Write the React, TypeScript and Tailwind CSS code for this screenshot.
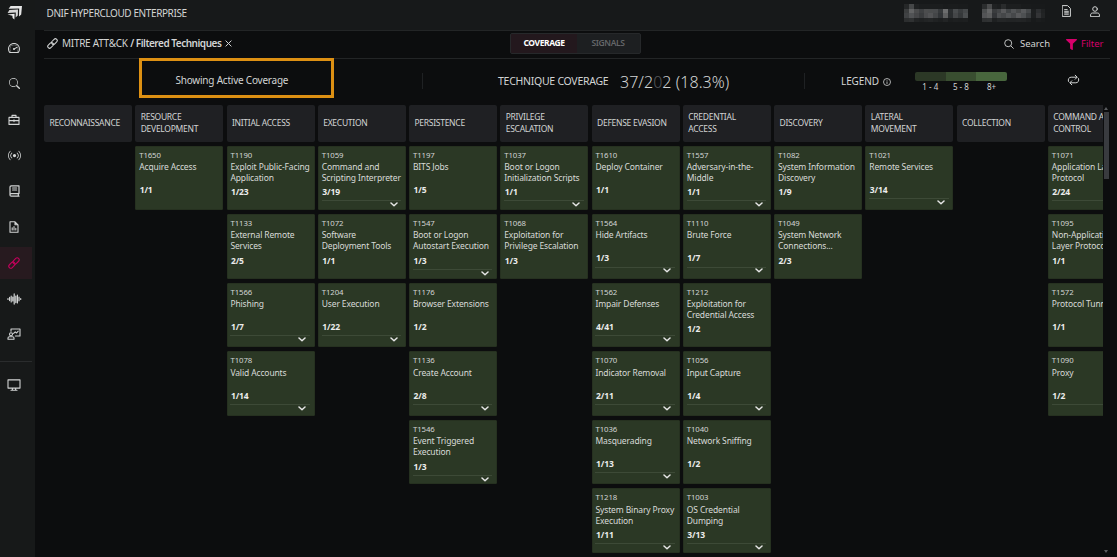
import type { ReactNode } from "react";
import { LiaTachometerAltSolid } from "react-icons/lia";
import { BsSearch, BsBroadcast } from "react-icons/bs";
import { FaFilter } from "react-icons/fa";

type Technique = { id: string; name: string; count: string; expandable?: boolean };
type Tactic = { title: string; items: Technique[] };

const t = (id: string, name: string, count: string, expandable = false): Technique => ({ id, name, count, expandable });

const tactics: Tactic[] = [
  { title: "RECONNAISSANCE", items: [] },
  { title: "RESOURCE\nDEVELOPMENT", items: [t("T1650", "Acquire Access", "1/1")] },
  {
    title: "INITIAL ACCESS",
    items: [
      t("T1190", "Exploit Public-Facing\nApplication", "1/23"),
      t("T1133", "External Remote\nServices", "2/5"),
      t("T1566", "Phishing", "1/7", true),
      t("T1078", "Valid Accounts", "1/14", true),
    ],
  },
  {
    title: "EXECUTION",
    items: [
      t("T1059", "Command and\nScripting Interpreter", "3/19", true),
      t("T1072", "Software\nDeployment Tools", "1/1"),
      t("T1204", "User Execution", "1/22", true),
    ],
  },
  {
    title: "PERSISTENCE",
    items: [
      t("T1197", "BITS Jobs", "1/5"),
      t("T1547", "Boot or Logon\nAutostart Execution", "1/3", true),
      t("T1176", "Browser Extensions", "1/2"),
      t("T1136", "Create Account", "2/8", true),
      t("T1546", "Event Triggered\nExecution", "1/3", true),
    ],
  },
  {
    title: "PRIVILEGE\nESCALATION",
    items: [
      t("T1037", "Boot or Logon\nInitialization Scripts", "1/1", true),
      t("T1068", "Exploitation for\nPrivilege Escalation", "1/3"),
    ],
  },
  {
    title: "DEFENSE EVASION",
    items: [
      t("T1610", "Deploy Container", "1/1"),
      t("T1564", "Hide Artifacts", "1/3", true),
      t("T1562", "Impair Defenses", "4/41", true),
      t("T1070", "Indicator Removal", "2/11", true),
      t("T1036", "Masquerading", "1/13", true),
      t("T1218", "System Binary Proxy\nExecution", "1/11", true),
    ],
  },
  {
    title: "CREDENTIAL\nACCESS",
    items: [
      t("T1557", "Adversary-in-the-\nMiddle", "1/1", true),
      t("T1110", "Brute Force", "1/7", true),
      t("T1212", "Exploitation for\nCredential Access", "1/2"),
      t("T1056", "Input Capture", "1/4", true),
      t("T1040", "Network Sniffing", "1/2"),
      t("T1003", "OS Credential\nDumping", "3/13", true),
    ],
  },
  {
    title: "DISCOVERY",
    items: [
      t("T1082", "System Information\nDiscovery", "1/9"),
      t("T1049", "System Network\nConnections...", "2/3"),
    ],
  },
  { title: "LATERAL\nMOVEMENT", items: [t("T1021", "Remote Services", "3/14", true)] },
  { title: "COLLECTION", items: [] },
  {
    title: "COMMAND AND\nCONTROL",
    items: [
      t("T1071", "Application Layer\nProtocol", "2/24", true),
      t("T1095", "Non-Application\nLayer Protocol", "1/1"),
      t("T1572", "Protocol Tunneling", "1/1"),
      t("T1090", "Proxy", "1/2", true),
    ],
  },
];

function Icon({ w, h, box, sw = 1, children }: { w: number; h: number; box: string; sw?: number; children: ReactNode }) {
  return (
    <svg width={w} height={h} viewBox={box} fill="none" stroke="currentColor" strokeWidth={sw} strokeLinecap="round" strokeLinejoin="round" className="shrink-0">
      {children}
    </svg>
  );
}

const Logo = () => (
  <svg width="16" height="16" viewBox="0 0 16 16" className="shrink-0">
    <path d="M3.6 1 H15 L14.2 9.6 L12 11.6 L12.2 3.6 L1.6 3.8 Z" fill="#e6e6e6" />
    <path d="M2.4 5 L11 4.6 L10.8 10.6 L8.6 12.4 L8.8 7.6 L0.6 8 Z" fill="#d6d6d6" />
    <path d="M0.4 9.4 L7.6 8.8 L7.4 14.4 L5.6 13 L5.4 10.8 Z" fill="#ececec" />
  </svg>
);

const Briefcase = () => (
  <Icon w={12} h={12} box="0 0 12 12" sw={1.1}>
    <path d="M1 3.4h10v7H1zM4 3.2V1.4h4v1.8M1 6.6h10M6 5.8v1.8" />
  </Icon>
);

const Book = () => (
  <Icon w={11} h={12} box="0 0 11 12" sw={1.2}>
    <path d="M10 8.6V.8H2.2C1.4.8 1 1.2 1 2v8c0 .8.4 1.2 1.2 1.2H10M10 8.6H2.2C1.4 8.6 1 9.2 1 9.9M9.3 8.7v2.4M3.6 3h4M3.6 5h4" />
  </Icon>
);

const FileChart = () => (
  <Icon w={10} h={12} box="0 0 10 12" sw={1.1}>
    <path d="M1 .8h5l3 3v7.4H1zM6 .8v3h3M3.2 9V6.8M5 9V5.6M6.8 9V7.4" />
  </Icon>
);

const LinkIcon = ({ size = 12, sw = 1.1 }: { size?: number; sw?: number }) => (
  <Icon w={size} h={size} box="0 0 12 12" sw={sw}>
    <rect x="-3.5" y="-2" width="7" height="4" rx="2" transform="translate(3.9 8.1) rotate(-45)" />
    <rect x="-3.5" y="-2" width="7" height="4" rx="2" transform="translate(8.1 3.9) rotate(-45)" />
  </Icon>
);

const Wave = () => (
  <Icon w={15} h={12} box="0 0 15 12" sw={1.2}>
    <path d="M1 5.5v1M2.6 4.4v3.2M4.2 3v6M5.8 4v4M7.2 .9v10.2M8.8 3v6.6M10.4 2v8M12 4.2v3.6M13.7 5.5v1" />
  </Icon>
);

const Presenter = () => (
  <Icon w={14} h={12} box="0 0 14 12" sw={1.1}>
    <path d="M4 3.2V1h9v7H8.4M6.6 5.4l1.6-1.6 1.4 1.2 1.6-1.8" />
    <circle cx="4" cy="6.2" r="1.5" />
    <path d="M1 11.2V10c0-.8.6-1.2 1.4-1.2h3.2c.8 0 1.4.4 1.4 1.2v1.2z" />
  </Icon>
);

const Desktop = () => (
  <Icon w={14} h={12} box="0 0 14 12" sw={1.1}>
    <path d="M1 .9h12v8.2H1zM5.4 9.2v2M8.6 9.2v2M4 11.3h6" />
  </Icon>
);

const Chevron = () => (
  <Icon w={8} h={5} box="0 0 8 5" sw={1.5}>
    <path d="M1 1l3 2.7L7 1" />
  </Icon>
);

const navItems: { key: string; icon: ReactNode; active?: boolean }[] = [
  { key: "dashboard", icon: <LiaTachometerAltSolid size={16} /> },
  { key: "search", icon: <BsSearch size={11} className="mb-px" /> },
  { key: "cases", icon: <Briefcase /> },
  { key: "streams", icon: <BsBroadcast size={13} /> },
  { key: "library", icon: <Book /> },
  { key: "reports", icon: <FileChart /> },
  { key: "coverage", icon: <LinkIcon size={12} />, active: true },
  { key: "signals", icon: <Wave /> },
  { key: "training", icon: <Presenter /> },
];

function Sidebar() {
  return (
    <aside className="flex w-[35px] shrink-0 flex-col bg-[#171919] text-[#d2d4d4]">
      <div className="flex h-[30.2px] w-[29px] shrink-0 items-center justify-center pb-[5px]">
        <Logo />
      </div>
      {navItems.map((n) => (
        <div key={n.key} className="flex h-[35.8px] items-center">
          <div className={n.active ? "flex h-8 w-8 items-center bg-[#271a1f] text-[#c4005c]" : "flex h-8 w-8 items-center"}>
            <div className="flex w-[28px] justify-center">{n.icon}</div>
          </div>
        </div>
      ))}
      <div className="mt-[8.6px] h-px w-8 bg-[#2a2c2d]" />
      <div className="mt-[17px] flex w-[28px] justify-center">
        <Desktop />
      </div>
    </aside>
  );
}

const mosaicA = [
  ["#252728", "#454748", "#1f2122", "#1b1d1e", "#1b1d1e", "#1b1d1e", "#1b1d1e", "#1b1d1e", "#191b1c", "#1a1c1d", "#1a1c1d", "#191b1c", "#191b1c"],
  ["#3b3d3e", "#626364", "#4b4c4d", "#3e4042", "#4c4d4e", "#4a4c4d", "#494b4d", "#36393b", "#6c6d6e", "#2b2e30", "#484b4d", "#393c3e", "#45484a"],
  ["#404244", "#515355", "#454648", "#393b3d", "#4a4b4d", "#525355", "#444648", "#313437", "#5e5f60", "#2a2d2f", "#444648", "#35383a", "#4b4e50"],
  ["#2c2e2f", "#2f3132", "#222425", "#1f2122", "#222425", "#242627", "#202223", "#1d1f20", "#222425", "#1b1d1e", "#1d1f20", "#1c1e1f", "#1d1f20"],
];
const mosaicB = [
  ["#2b2d2e", "#4a4b4c", "#1f2122", "#1c1e1f", "#292b2c", "#1c1e1f", "#1c1e1f", "#1c1e1f", "#191b1c", "#191b1c", "#181a1b", "#181a1b", "#181a1b"],
  ["#4c4e4f", "#646566", "#3a3c3e", "#434547", "#58595b", "#414446", "#525456", "#464849", "#57595b", "#45484a", "#1d1f20", "#2c2e30", "#202223"],
  ["#535456", "#5c5d5e", "#333538", "#4c4e50", "#454749", "#515355", "#46484a", "#58595b", "#4d5052", "#393c3e", "#1d1f20", "#333436", "#222425"],
  ["#2e3031", "#303233", "#1e2021", "#242627", "#242627", "#222425", "#222425", "#232526", "#222425", "#1e2021", "#181a1b", "#1b1d1e", "#191b1c"],
];

function Mosaic({ rows }: { rows: string[][] }) {
  return (
    <div className="flex flex-col">
      {rows.map((r, i) => (
        <div key={i} className="flex">
          {r.map((c, j) => (
            <div key={j} className="h-[4.5px] w-[4.9px]" style={{ backgroundColor: c }} />
          ))}
        </div>
      ))}
    </div>
  );
}

function TopBar() {
  return (
    <header className="flex h-[30px] shrink-0 items-start bg-[#17191a]">
      <div className="w-[869px] pl-[11.5px] pt-[6px] text-[10px] leading-[14px] tracking-[-0.4px]">DNIF HYPERCLOUD ENTERPRISE</div>
      <div className="pt-[4px]">
        <Mosaic rows={mosaicA} />
      </div>
      <div className="pl-[14.3px] pt-[4px]">
        <Mosaic rows={mosaicB} />
      </div>
      <div className="pl-[17px] pt-[5px]">
        <Icon w={9} h={12} box="0 0 9 12">
          <path d="M.6.6h5l2.8 2.8v8H.6zM2.6 4.6h2.6M2.6 6.3h3.8M2.6 7.8h3.8M2.6 9.2h3.8" />
        </Icon>
      </div>
      <div className="pl-[19px] pt-[5.5px]">
        <Icon w={10} h={11} box="0 0 10 11">
          <circle cx="5" cy="3" r="2.3" />
          <path d="M.6 10.3V9c0-1.2.8-2 2-2h4.8c1.2 0 2 .8 2 2v1.3z" />
        </Icon>
      </div>
    </header>
  );
}

function CrumbBar() {
  return (
    <div className="ml-[9px] mr-[7px] flex h-[29px] shrink-0 items-center border-y border-[#232526]">
      <div className="flex w-[466px] items-center pb-[2.5px] pl-[3px] text-[10px] leading-[14px]">
        <LinkIcon size={11} sw={1.15} />
        <span className="ml-[4px] tracking-[-0.28px]">MITRE ATT&amp;CK</span>
        <span className="ml-[2.5px] font-semibold tracking-[-0.48px]">/ Filtered Techniques</span>
        <svg width="7" height="7" viewBox="0 0 7 7" className="ml-[4px]" stroke="currentColor" strokeWidth="1">
          <path d="M.6.6l5.8 5.8M6.4.6L.6 6.4" />
        </svg>
      </div>
      <div className="mb-[2px] flex h-[21.5px] w-[131px] overflow-hidden rounded-[2px] border border-[#26282a] bg-[#1d1f21] text-[8.5px] tracking-[-0.4px]">
        <div className="flex w-[66px] items-center justify-center bg-[#23181d] pb-[1px] font-bold text-white">COVERAGE</div>
        <div className="flex flex-1 items-center justify-center pb-[1px] pr-[1px] font-semibold text-[#646668]">SIGNALS</div>
      </div>
      <div className="ml-auto flex items-center pb-px text-[9.5px] leading-[14px]">
        <svg width="10" height="10" viewBox="0 0 10 10" fill="none" stroke="currentColor" strokeWidth="0.9">
          <circle cx="4.2" cy="4.2" r="3.5" />
          <path d="M6.8 6.8L9.6 9.6" />
        </svg>
        <span className="ml-[6px] w-[46px]">Search</span>
        <FaFilter size={11} className="text-[#d6006a]" />
        <span className="ml-[4px] mr-[6.5px] text-[#d6006a]">Filter</span>
      </div>
    </div>
  );
}

const legend = [
  { label: "1 - 4", cls: "bg-[#2c3826] rounded-l-[2px]" },
  { label: "5 - 8", cls: "bg-[#394e30]" },
  { label: "8+", cls: "bg-[#48663d] rounded-r-[2px]" },
];

function StatsBar() {
  return (
    <div className="flex h-[46px] shrink-0 items-start">
      <div className="ml-[104px] mt-[-1px] flex h-[39.5px] w-[195px] items-center border-[3px] border-[#dd9013] bg-[#0c0d0e] pl-[33.5px] pt-[6px] text-[10px] tracking-[-0.22px]">
        Showing Active Coverage
      </div>
      <div className="ml-[88px] mt-[14px] h-4 w-px bg-[#1f2123]" />
      <div className="ml-[75px] mt-[11.5px] flex h-[22px] w-[306px] items-center">
        <span className="w-[122px] text-[10.5px] tracking-[-0.27px]">TECHNIQUE COVERAGE</span>
        <span className="text-[16px] font-light tracking-[0.05px]">
          37/2<span className="text-[#55575a]">0</span>2 (18.3%)
        </span>
      </div>
      <div className="mt-[14px] h-4 w-px bg-[#1f2123]" />
      <div className="ml-[36px] mt-[11px] flex h-[22px] w-[74px] items-center text-[10px] tracking-[-0.1px]">
        LEGEND
        <svg width="8" height="8" viewBox="0 0 8 8" fill="none" stroke="currentColor" strokeWidth="0.8" className="ml-[4px] mt-[2px]">
          <circle cx="4" cy="4" r="3.5" />
          <path d="M4 3.4v2.6M4 1.9v.8" />
        </svg>
      </div>
      <div className="mt-[13px] flex">
        {legend.map((l) => (
          <div key={l.label} className="flex w-[30.6px] flex-col items-center">
            <div className={`${l.cls} h-[9px] w-full`} />
            <span className="text-[8px] leading-[12.4px]">{l.label}</span>
          </div>
        ))}
      </div>
      <div className="ml-[60px] mt-[15px]">
        <Icon w={13} h={12} box="0 0 13 12">
          <path d="M1.4 7.4C.8 5 2 3.2 4.2 3.2h5.6M8.2 1.2l2 2-2 2M11.6 4.6c.6 2.4-.6 4.2-2.8 4.2H3.2M4.8 6.8l-2 2 2 2" />
        </Icon>
      </div>
    </div>
  );
}

function Card({ item }: { item: Technique }) {
  return (
    <div className="mb-[4.1px] h-[64.5px] w-[88px] rounded-[1px] border border-[#263120] bg-[#2b3825] pl-[2.9px] pt-[2px]">
      <div className="h-[12px] text-[7.8px] leading-[12px] tracking-[-0.1px]">{item.id}</div>
      <div className="mt-[1.4px] min-h-[19.1px] whitespace-pre text-[8.5px] leading-[10.7px] tracking-[-0.13px] text-[#d8dad8]">{item.name}</div>
      <div className="ml-[0.5px] mt-[3.9px] h-[10px] text-[8.5px] font-bold leading-[10px] tracking-[-0.1px] text-[#ececec]">{item.count}</div>
      {item.expandable && (
        <div className="mt-[3.2px] flex w-[79.5px] justify-end border-t border-[#3d4a37] pr-[3.6px] pt-[0.8px] text-[#e6e6e6]">
          <Chevron />
        </div>
      )}
    </div>
  );
}

function Matrix() {
  return (
    <div className="flex min-h-0 flex-1 pl-[9px]">
      <div className="flex w-[1059px] shrink-0 gap-[3.27px] overflow-hidden">
        {tactics.map((tac) => (
          <div key={tac.title} className="w-[88px] shrink-0">
            <div className="mb-[4px] flex h-[36.5px] items-center whitespace-pre rounded-[2px] bg-[#1f2023] pl-[5.4px] text-[8.5px] leading-[12.2px] tracking-[-0.27px]">
              {tac.title}
            </div>
            {tac.items.map((it) => (
              <Card key={it.id} item={it} />
            ))}
          </div>
        ))}
      </div>
      <div className="flex w-[6px] flex-col items-center pt-[2px]">
        <svg width="4" height="3" viewBox="0 0 4 3">
          <path d="M2 0l2 3H0z" fill="#5a5c5e" />
        </svg>
        <div className="mt-[2px] h-[67px] w-[5px] bg-[#393b3f]" />
        <svg width="4" height="3" viewBox="0 0 4 3" className="mb-[4px] mt-auto">
          <path d="M2 3l2-3H0z" fill="#5a5c5e" />
        </svg>
      </div>
    </div>
  );
}

export default function App() {
  return (
    <div className="flex h-[557px] w-[1117px] overflow-hidden bg-[#0c0d0e] font-['Noto_Sans',sans-serif] text-[#d2d4d4]">
      <Sidebar />
      <main className="flex min-w-0 flex-1 flex-col">
        <TopBar />
        <CrumbBar />
        <StatsBar />
        <Matrix />
      </main>
    </div>
  );
}
